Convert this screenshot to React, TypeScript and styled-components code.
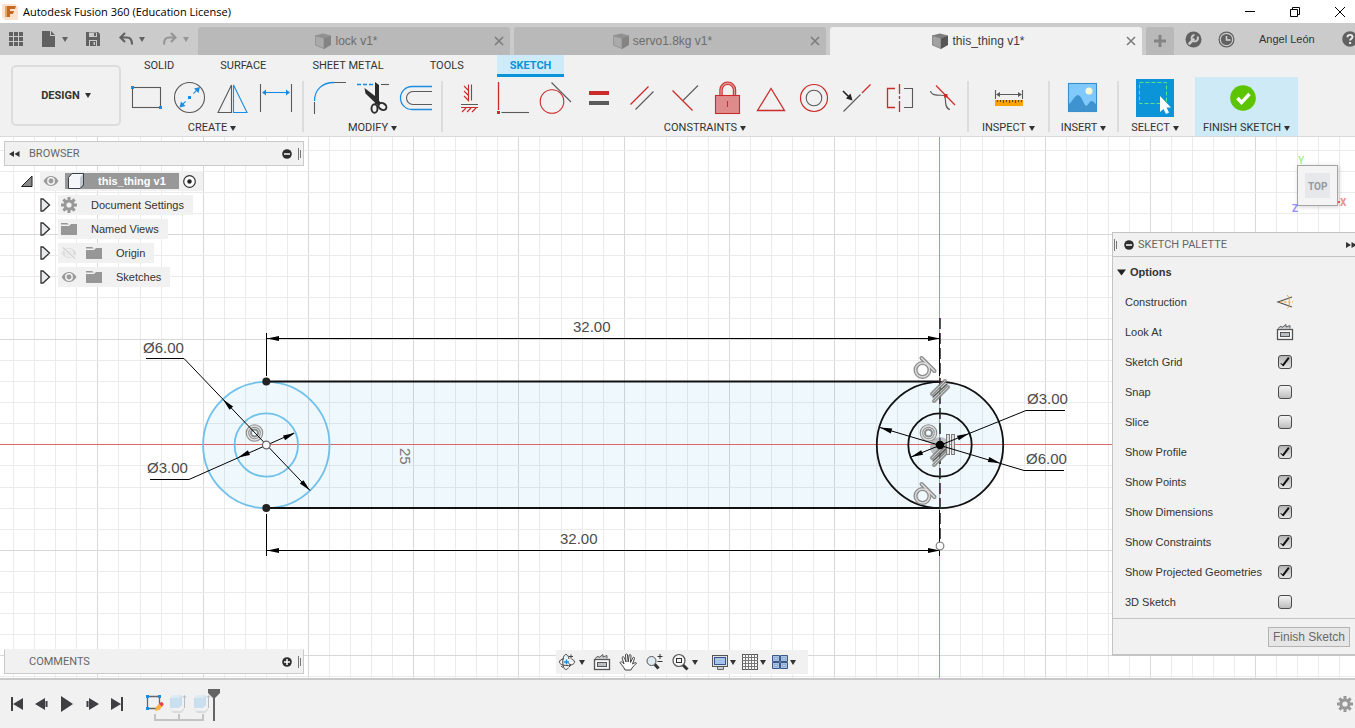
import React, { useState } from "react";
import styled, { createGlobalStyle, css } from "styled-components";

const UI = '"Liberation Sans", Arial, sans-serif';
const CAPS = 'Roboto, "Liberation Sans", sans-serif';
const INK = "#5a5a5a";
const BLUE = "#1b8ce3";
const RED = "#cc2b2b";

const GlobalStyle = createGlobalStyle`
  *, *::before, *::after { box-sizing: border-box; }
  html, body { margin: 0; padding: 0; background: #fff; }
  body { overflow: hidden; font-family: ${UI}; font-size: 11px; color: #333; }
  button { margin: 0; padding: 0; border: 0; background: none; font: inherit; color: inherit; cursor: pointer; }
  svg { display: block; flex: none; }
`;

const App = styled.div`
  display: flex;
  flex-direction: column;
  min-height: 100vh;
`;

/* ---------- title bar ---------- */
const TitleBar = styled.header`
  display: flex;
  align-items: center;
  height: 23px;
  padding-left: 2px;
  gap: 5px;
  background: #fff;
`;
const Title = styled.h1`
  flex: 1;
  margin: 0;
  font: 400 11px/20px "Open Sans", "Noto Sans", sans-serif;
  color: #000;
  white-space: nowrap;
`;
const WindowControls = styled.div`
  display: flex;
  margin-right: -7px;
`;
const WindowButton = styled.button`
  display: flex;
  align-items: center;
  justify-content: center;
  width: 45px;
  height: 20px;
`;

/* ---------- document tab bar ---------- */
const TabBar = styled.nav`
  display: flex;
  align-items: flex-end;
  height: 32px;
  background: #cbcbcb;
`;
const QuickTools = styled.div`
  display: flex;
  align-items: center;
  gap: 17px;
  width: 198px;
  height: 32px;
  padding-left: 8px;
`;
const QuickButton = styled.button<{ $dim?: boolean }>`
  display: flex;
  align-items: center;
  gap: 5px;
  color: ${(p) => (p.$dim ? "#969696" : "#616161")};
`;
const DocTabs = styled.div`
  display: flex;
  flex: 1;
  gap: 4px;
  min-width: 0;
`;
const DocTab = styled.div<{ $active?: boolean }>`
  display: flex;
  align-items: center;
  flex: 1;
  min-width: 0;
  height: 28px;
  padding: 0 4px;
  border-radius: 3px 3px 0 0;
  background: ${(p) => (p.$active ? "#f1f1f1" : "#b9b9b9")};
  color: ${(p) => (p.$active ? "#3c3c3c" : "#6c6c6c")};
`;
const DocName = styled.button`
  display: flex;
  flex: 1;
  align-items: center;
  justify-content: center;
  gap: 4px;
  font-size: 12px;
  white-space: nowrap;
`;
const CloseButton = styled.button`
  display: flex;
  align-items: center;
  justify-content: center;
  width: 15px;
  height: 20px;
  color: #7a7a7a;
`;
const NewTab = styled.button`
  display: flex;
  align-items: center;
  justify-content: center;
  width: 28px;
  height: 28px;
  margin-left: 4px;
  border-radius: 3px 3px 0 0;
  background: #b9b9b9;
`;
const Account = styled.div`
  display: flex;
  align-items: center;
  gap: 16px;
  width: 181px;
  height: 32px;
  padding-left: 11px;
  overflow: hidden;
`;
const UserButton = styled.button`
  padding: 0 11px 0 8px;
  white-space: nowrap;
`;

/* ---------- ribbon ---------- */
const Ribbon = styled.section`
  display: flex;
  gap: 5px;
  height: 82px;
  padding-left: 11px;
  border-bottom: 1px solid #dadada;
  background: #f1f1f1;
  overflow: hidden;
`;
const WorkspaceButton = styled.button`
  display: flex;
  align-items: center;
  justify-content: center;
  gap: 5px;
  flex: none;
  width: 110px;
  height: 61px;
  margin-top: 10px;
  border: 2px solid #dcdcdc;
  border-radius: 5px;
  font: 700 11px/16px ${CAPS};
`;
const RibbonBody = styled.div`
  flex: none;
`;
const RibbonTabs = styled.div`
  display: flex;
  gap: 20px;
  height: 22px;
  padding-left: 5px;
`;
const RibbonTab = styled.button<{ $active?: boolean }>`
  height: 22px;
  padding: 3px 13px 0;
  font: 400 11px/16px ${CAPS};
  border-bottom: 3px solid transparent;
  white-space: nowrap;
  ${(p) =>
    p.$active &&
    css`
      font-weight: 700;
      color: #0a94d8;
      background: #cdebf8;
      border-bottom-color: #0a94d8;
    `}
`;
const Groups = styled.div`
  display: flex;
  gap: 4px;
  height: 59px;
`;
const Group = styled.div<{ $width?: number; $accent?: boolean }>`
  display: flex;
  flex-direction: column;
  align-items: center;
  gap: 4px;
  width: ${(p) => (p.$width ? `${p.$width}px` : "auto")};
  padding-top: 3px;
  ${(p) =>
    p.$accent &&
    css`
      margin-left: 4px;
      background: #cdeaf6;
    `}
`;
const Divider = styled.div`
  width: 2px;
  height: 51px;
  margin-top: 4px;
  background: #dcdcdc;
`;
const ToolRow = styled.div`
  display: flex;
`;
const ToolButton = styled.button`
  display: flex;
  align-items: center;
  justify-content: center;
  width: 43px;
  height: 36px;
`;
const GroupLabel = styled.button`
  display: flex;
  align-items: center;
  gap: 3px;
  height: 16px;
  font: 400 11px/16px ${CAPS};
  white-space: nowrap;
`;

/* ---------- canvas ---------- */
const Canvas = styled.main`
  position: relative;
  flex: 1;
  min-height: 541px;
  background: #fff;
  overflow: hidden;
`;
const Drawing = styled.svg`
  width: 100%;
  height: 100%;
  position: absolute;
  inset: 0;
`;
const BrowserDock = styled.aside`
  position: absolute;
  left: 4px;
  top: 4px;
  width: 300px;
`;
const PanelHeader = styled.div<{ $open?: boolean }>`
  display: flex;
  align-items: center;
  height: 25px;
  padding: 0 1px 0 4px;
  border: 1px solid #cacaca;
  border-top-color: ${(p) => (p.$open ? "#cacaca" : "#f1f1f1")};
  background: #f1f1f1;
  font: 400 11px/16px ${CAPS};
  color: #666;
`;
const PanelTitle = styled.span<{ $inset?: boolean }>`
  flex: 1;
  margin-left: ${(p) => (p.$inset ? "20px" : "9px")};
`;
const PanelIcons = styled.div`
  display: flex;
  align-items: center;
  gap: 6px;
`;
const Tree = styled.ul`
  list-style: none;
  display: flex;
  flex-direction: column;
  gap: 4px;
  margin: 5px 0 0;
  padding: 0 0 0 16px;
`;
const TreeRow = styled.li<{ $depth: number }>`
  display: flex;
  align-items: center;
  gap: 7px;
  height: 20px;
  padding-left: ${(p) => p.$depth * 19}px;
`;
const TreeItem = styled.div`
  display: flex;
  align-items: center;
  height: 20px;
  padding: 0 9px 0 3px;
  background: #f1f1f1;
  white-space: nowrap;
`;
const RootItem = styled(TreeItem)`
  padding-right: 7px;
`;
const TreeName = styled.button`
  display: flex;
  align-items: center;
  gap: 14px;
`;
const VisibilityButton = styled.button`
  margin-right: 9px;
`;
const RootName = styled(TreeName)`
  height: 16px;
  margin-right: 4px;
  margin-left: -3px;
  padding: 0 13px 0 3px;
  background: #989898;
  color: #fff;
  font-weight: 700;
`;
const CommentsDock = styled.aside`
  position: absolute;
  left: 4px;
  bottom: 4px;
  width: 300px;
`;
const CubeDock = styled.div`
  position: absolute;
  right: 5px;
  top: 16px;
`;

/* ---------- sketch palette ---------- */
const Palette = styled.aside`
  position: absolute;
  right: 0;
  top: 95px;
  width: 243px;
  border: 1px solid #c4c4c4;
  border-right: 0;
  border-bottom-width: 2px;
  background: #f1f1f1;
  overflow: hidden;
`;
const PaletteHeader = styled.div`
  display: flex;
  align-items: center;
  gap: 4px;
  height: 24px;
  padding-left: 1px;
  border-bottom: 1px solid #c4c4c4;
  font: 400 11px/16px ${CAPS};
  color: #666;
`;
const PaletteTitle = styled.span`
  flex: 1;
`;
const PaletteGrip = styled.div`
  width: 6px;
`;
const CollapseButton = styled.button`
  margin-right: -2px;
`;
const PaletteSection = styled.button`
  display: flex;
  align-items: center;
  gap: 4px;
  height: 30px;
  padding-left: 4px;
  font-weight: 700;
`;
const OptionRow = styled.div`
  display: flex;
  align-items: center;
  height: 30px;
  padding-left: 12px;
`;
const OptionLabel = styled.label`
  width: 151px;
  white-space: nowrap;
`;
const OptionControl = styled.div`
  display: flex;
  justify-content: center;
  width: 18px;
`;
const Check = styled.input`
  appearance: none;
  display: flex;
  justify-content: center;
  width: 14px;
  height: 14px;
  margin: 0;
  border: 1px solid #4a4a4a;
  border-radius: 3px;
  background: linear-gradient(#f4f4f4, #bdbdbd);
  &:checked {
    background: linear-gradient(#b4b4b4, #e4e4e4);
  }
  &:checked::before {
    content: "";
    width: 4px;
    height: 10px;
    border: solid #111;
    border-width: 0 2px 1px 0;
    transform: rotate(38deg);
  }
`;
const PaletteFooter = styled.div`
  display: flex;
  justify-content: flex-end;
  height: 36px;
  margin-top: 1px;
  padding: 8px 5px 0 0;
  border-top: 1px solid #c4c4c4;
`;
const FinishButton = styled.button`
  width: 82px;
  height: 20px;
  border: 1px solid #b4b4b4;
  background: #e6e6e6;
  font-size: 12px;
  color: #6a6a6a;
`;

/* ---------- navigation bar ---------- */
const NavDock = styled.div`
  position: absolute;
  left: 8px;
  right: 0;
  bottom: 4px;
  display: flex;
  justify-content: center;
  pointer-events: none;
`;
const NavBar = styled.div`
  display: flex;
  align-items: center;
  gap: 13px;
  height: 24px;
  padding: 0 12px 0 2px;
  background: #f1f1f1;
  pointer-events: auto;
`;
const NavGroup = styled.div<{ $gap: number }>`
  display: flex;
  gap: ${(p) => p.$gap}px;
`;
const NavButton = styled.button<{ $gap?: number }>`
  display: flex;
  align-items: center;
  gap: ${(p) => p.$gap ?? 1}px;
`;

/* ---------- timeline ---------- */
const Timeline = styled.footer`
  display: flex;
  align-items: center;
  height: 50px;
  padding: 0 2px 0 9px;
  border-top: 2px solid #c9c9c9;
  background: #f1f1f1;
`;
const Playback = styled.div`
  display: flex;
  gap: 9px;
`;
const History = styled.div`
  display: flex;
  flex: 1;
  height: 34px;
  margin-left: 17px;
`;
const Features = styled.div`
  display: flex;
  flex-direction: column;
  gap: 1px;
  padding-top: 6px;
`;
const FeatureRow = styled.div`
  display: flex;
`;
const Marker = styled.div`
  margin-left: -6px;
`;

/* ---------- small glyphs ---------- */
const Caret = () => (
  <svg width="6" height="5" viewBox="0 0 6 5"><path d="M0 0h6L3 5z" fill="currentColor" /></svg>
);
const Doc = ({ active }: { active?: boolean }) => (
  <svg width="16" height="16" viewBox="0 0 16 16">
    <path d="M0 2.500 8 .5l8 2-7 3z" fill={active ? "#7d7d7d" : "#919191"} />
    <path d="M.4 2.700 9 5v10.600L.4 12z" fill={active ? "#a2a2a2" : "#aaa"} stroke={active ? "#777" : "#8d8d8d"} strokeWidth=".8" />
    <path d="M9 5.200 16 2.500V12l-7 4z" fill={active ? "#555" : "#848484"} />
  </svg>
);
const Cross = () => (
  <svg width="10" height="10" viewBox="0 0 10 10"><path d="M1 1l8 8M9 1 1 9" stroke="currentColor" strokeWidth="1.500" /></svg>
);
const Eye = ({ off }: { off?: boolean }) => (
  <svg width="16" height="12" viewBox="0 0 16 12">
    <path d="M.5 6C3 2 5.500 1 8 1s5 1 7.500 5C13 10 10.500 11 8 11S3 10 .5 6z" fill={off ? "#dedede" : "#9a9a9a"} />
    <circle cx="8" cy="6" r="3.200" fill="none" stroke="#f1f1f1" strokeWidth="1.500" />
    {off && <path d="M2 .5 14 11.500" stroke="#f1f1f1" strokeWidth="3" />}
    {off && <path d="M2 .5 14 11.500" stroke="#d2d2d2" strokeWidth="1.200" />}
  </svg>
);
const Folder = () => (
  <svg width="16" height="14" viewBox="0 0 16 14">
    <path d="M0 1h6l2 1.500H0zM0 4h8l2-2h6v11H0z" fill="#979797" />
  </svg>
);
const Gear = () => (
  <svg width="16" height="16" viewBox="0 0 16 16">
    {[0, 45, 90, 135].map((a) => (
      <rect key={a} x="6.500" y="0" width="3" height="16" fill="#989898" transform={`rotate(${a} 8 8)`} />
    ))}
    <circle cx="8" cy="8" r="5.600" fill="#989898" />
    <circle cx="8" cy="8" r="2.600" fill="#f1f1f1" />
  </svg>
);
const Disc = ({ plus }: { plus?: boolean }) => (
  <svg width="10" height="10" viewBox="0 0 10 10">
    <circle cx="5" cy="5" r="4.800" fill="#2e2e2e" />
    <path d={plus ? "M2 5h6M5 2v6" : "M2 5h6"} stroke="#fff" strokeWidth="1.500" />
  </svg>
);
const Grip = () => (
  <svg width="4" height="12" viewBox="0 0 4 12"><path d="M.5 0v12M2.500 2v8" stroke="#777" /></svg>
);
const DoubleArrow = ({ right }: { right?: boolean }) => (
  <svg width="11" height="6" viewBox="0 0 11 6">
    <path d={right ? "M0 0v6l5-3zM5.500 0v6l5-3z" : "M5 0v6L0 3zM10.500 0v6l-5-3z"} fill="#333" />
  </svg>
);
const Expander = () => (
  <svg width="12" height="16" viewBox="0 0 12 16">
    <path d="M2 2v12h2l6.500-6L4 2z" fill="#e9ecec" stroke="#333" strokeWidth="1.300" />
  </svg>
);
const LookAt = () => (
  <svg width="18" height="18" viewBox="0 0 18 18" fill="none" stroke="#555">
    <path d="M2 5.500 5 3l1 1.500 4-3V4l4-1.500v3" fill="#c5c9cc" strokeWidth=".9" />
    <rect x="1.500" y="6.500" width="15" height="10" fill="#fafafa" strokeWidth="1.300" />
    <rect x="4.500" y="9.500" width="9" height="4" fill="#b9bec2" />
  </svg>
);

/* ---------- ribbon tools, each on a 43 x 36 cell ---------- */
const Tool = ({ name, children }: { name: string; children: React.ReactNode }) => (
  <ToolButton aria-label={name}>
    <svg width="43" height="36" viewBox="0 0 43 36" fill="none" stroke={INK} strokeWidth="1.100">{children}</svg>
  </ToolButton>
);

const createTools = (
  <ToolRow>
    <Tool name="Rectangle">
      <rect x="6.500" y="7.500" width="28" height="20" />
      <path d="M5 6h3v3H5zM33 26h3v3h-3z" fill={BLUE} stroke="none" />
    </Tool>
    <Tool name="Circle">
      <circle cx="20.500" cy="17.500" r="15" />
      <path d="M12 26 29 9" stroke={BLUE} strokeDasharray="6.500 3.500 4 3.500 8" />
      <path d="M19 16h3v3h-3zM31 7l-1.500 6-4.500-4.500zM10.500 27.500l1.500-6 4.500 4.500z" fill={BLUE} stroke="none" />
    </Tool>
    <Tool name="Mirror">
      <path d="M19.500 5v27.500H6z" />
      <path d="M21.500 5v27.500H35z" stroke={BLUE} />
    </Tool>
    <Tool name="Sketch dimension">
      <path d="M5.500 4v28M36.500 4v28" />
      <path d="M9 12.500h24" stroke={BLUE} />
      <path d="M7 12.500l4-3v6zM35 12.500l-4-3v6z" fill={BLUE} stroke="none" />
    </Tool>
  </ToolRow>
);
const modifyTools = (
  <ToolRow>
    <Tool name="Fillet">
      <path d="M6.500 34V22M26 2.500h12" />
      <path d="M6.500 21C6.500 10 14 2.500 26 2.500" stroke={BLUE} strokeWidth="1.300" />
    </Tool>
    <Tool name="Trim">
      <path d="M6 4.500h4M12 4.500h4M18 4.500h4" stroke={BLUE} strokeWidth="1.300" />
      <path d="M30 4.500h8" />
      <path d="M24 2l4 3v17l-4 3zM13.500 8 24 16l6 7-3 2.500L14.500 13.500z" fill="#2b2b2b" stroke="none" />
      <ellipse cx="23.500" cy="28.500" rx="3" ry="4.300" stroke="#2b2b2b" strokeWidth="1.900" />
      <ellipse cx="31.500" cy="26.500" rx="4.200" ry="3.200" stroke="#2b2b2b" strokeWidth="1.900" transform="rotate(35 31.500 26.500)" />
    </Tool>
    <Tool name="Offset">
      <path d="M38 6.500H18a11.500 11.500 0 0 0 0 23h20" stroke={BLUE} strokeWidth="1.300" />
      <path d="M38 11.500H19a6.500 6.500 0 0 0 0 13h19" />
    </Tool>
  </ToolRow>
);
const constraintTools = (
  <ToolRow>
    <Tool name="Horizontal or vertical">
      <path d="M24.500 4.500v16M14 24.500h17" />
      <path d="M21.500 4.500v17M17 6l4.500 4.500M17 11l4.500 4.500M17 16l4.500 4.500M14 27.500h17M15 32l4-4M20 32l4-4M25 32l4-4" stroke={RED} />
    </Tool>
    <Tool name="Coincident">
      <path d="M8.500 2v28" stroke={RED} strokeWidth="1.300" />
      <path d="M7 31h3v3H7z" fill={RED} stroke="none" />
      <path d="M11.500 32.500H39" />
    </Tool>
    <Tool name="Tangent">
      <circle cx="19" cy="21.500" r="11.800" stroke={RED} />
      <path d="M18.500 2.500 38 22" />
    </Tool>
    <Tool name="Equal">
      <path d="M13 11h20v4H13z" fill={RED} stroke="none" />
      <path d="M13 21h20v4H13z" fill={INK} stroke="none" />
    </Tool>
    <Tool name="Parallel">
      <path d="M11.500 24.500l18-18" stroke={RED} strokeWidth="1.300" />
      <path d="M16.500 29.500l18-18" />
    </Tool>
    <Tool name="Perpendicular">
      <path d="M10.500 10.500l20 20" stroke={RED} strokeWidth="1.300" />
      <path d="M21 20.500l15-15" />
    </Tool>
    <Tool name="Fix">
      <path d="M16 16v-6a6.500 6.500 0 0 1 13.500 0v6" stroke={RED} strokeWidth="3.400" />
      <path d="M16 16v-6a6.500 6.500 0 0 1 13.500 0v6" stroke="#e49a9a" strokeWidth="1.300" />
      <rect x="10.500" y="15.500" width="24" height="18" fill="#e08b8b" stroke={RED} />
      <path d="M22.500 21v6" stroke={RED} />
    </Tool>
    <Tool name="Midpoint">
      <path d="M23 8.500 9.500 30.500h27z" stroke={RED} strokeWidth="1.300" />
    </Tool>
    <Tool name="Concentric">
      <circle cx="23" cy="18" r="13.500" stroke={RED} strokeWidth="1.200" />
      <circle cx="23" cy="18" r="7.800" />
    </Tool>
    <Tool name="Collinear">
      <path d="M9.500 31.500l17-17" />
      <path d="M28 13l8.500-8.500" stroke={RED} strokeWidth="1.300" />
      <path d="M9 11l6 6" stroke="#222" strokeWidth="1.600" />
      <path d="M18.500 20.500l-6.500-2 4.500-5z" fill="#222" stroke="none" />
    </Tool>
    <Tool name="Symmetry">
      <path d="M18 8.500h-7.500v19H18M22.500 4v10M22.500 16v3M22.500 21v11" stroke={RED} strokeWidth="1.300" />
      <path d="M27 8.500h8.500v19H27" />
    </Tool>
    <Tool name="Curvature">
      <path d="M10.500 11c1 5 8 4 14 4.500 2 2-1 13 5.500 14" />
      <path d="M16 5.500 35 25" stroke={RED} strokeWidth="1.200" />
      <path d="M24 14h3.500v3.500H24z" fill={RED} stroke="none" />
    </Tool>
  </ToolRow>
);
const inspectTool = (
  <Tool name="Measure">
    <path d="M8.500 10v9M35.500 10v9M11 14.500h22" />
    <path d="M9 14.500l4-2.500v5zM35 14.500l-4-2.500v5z" fill={INK} stroke="none" />
    <path d="M8 20h28v6H8z" fill="#f9a200" stroke="none" />
    <path d="M10.500 20v2M13.500 20v2M16.500 20v3M19.500 20v2M22.500 20v3M25.500 20v2M28.500 20v3M31.500 20v2M34.500 20v2" stroke="#6b4a10" />
  </Tool>
);
const insertTool = (
  <Tool name="Insert image">
    <rect x="6.500" y="3.500" width="28" height="28" fill="#80c9fc" stroke="#3b8fc9" />
    <circle cx="27" cy="11" r="3.500" fill="#fdf8cf" stroke="none" />
    <path d="M7 24c4-3 5-8 9-9 4 1 5 8 8 11 3-1 3-5 5.500-5 2 0 3 2 5 4v6.500H7z" fill="#3f93cf" stroke="none" />
  </Tool>
);
const selectTool = (
  <ToolButton aria-label="Select">
    <svg width="38" height="38" viewBox="0 0 38 38">
      <path d="M0 0h38v38H0z" fill="#0c94d8" />
      <rect x="3.500" y="3.500" width="27" height="21" fill="none" stroke="#5fe08c" strokeDasharray="4 2" />
      <path d="M24 17v16l3.500-3 2.500 5 3-1.500-2.500-5h4.500z" fill="#fff" />
    </svg>
  </ToolButton>
);
const finishTool = (
  <Tool name="Finish sketch">
    <circle cx="18" cy="18" r="12.800" fill="#5cc400" stroke="none" />
    <path d="M12.500 18l4 4.500 8-8.500" stroke="#fff" strokeWidth="3.400" />
  </Tool>
);

/* ---------- sketch geometry ---------- */
const UNIT = 21.05;
const OX = 939.4;
const OY = 444.4;

const Grid = () => {
  const lines = [];
  for (let k = -46; k <= 90; k++) {
    const major = k % 5 === 0;
    lines.push(<rect key={`v${k}`} x={Math.round(OX + k * UNIT)} y="0" width="1" height="3000" fill={major ? "#d8d8d8" : "#ebebeb"} />);
  }
  for (let k = -20; k <= 90; k++) {
    const major = k % 5 === 0;
    lines.push(<rect key={`h${k}`} x="0" y={Math.round(OY + k * UNIT)} width="4000" height="1" fill={major ? "#d8d8d8" : "#ebebeb"} />);
  }
  return <g shapeRendering="crispEdges">{lines}</g>;
};

const Arrow = ({ x, y, a }: { x: number; y: number; a: number }) => (
  <path d="M0 0-12-2.500v5z" fill="#000" transform={`translate(${x} ${y}) rotate(${a})`} />
);

const TangentMark = ({ x, y }: { x: number; y: number }) => (
  <g transform={`translate(${x} ${y})`} fill="none" strokeLinecap="round">
    <g stroke="#8b8b8b" strokeWidth="4"><circle r="7" /><path d="M-1-12 12 1" /></g>
    <g stroke="#dcdcdc" strokeWidth="1.500"><circle r="7" /><path d="M-1-12 12 1" /></g>
  </g>
);
const ConcentricMark = ({ x, y }: { x: number; y: number }) => (
  <g transform={`translate(${x} ${y})`} fill="none">
    <circle r="7" stroke="#8b8b8b" strokeWidth="3.600" />
    <circle r="7" stroke="#e2e2e2" strokeWidth="1.500" />
    <circle r="3.500" stroke="#8b8b8b" strokeWidth="2" />
  </g>
);
const ParallelMark = ({ x, y }: { x: number; y: number }) => (
  <g transform={`translate(${x} ${y})`} strokeLinecap="round">
    <path d="M-8 3 5-10M-6 10 8-4" stroke="#858585" strokeWidth="4" opacity=".85" />
    <path d="M-7 6 7-7" stroke="#555" strokeWidth="1.500" />
    <path d="M-8 3 5-10M-6 10 8-4" stroke="#cfcfcf" />
  </g>
);

const Sketch = () => (
  <Drawing role="img" aria-label="Sketch of a link with two concentric circle ends">
    <g transform="translate(0 -137)">
      <Grid />
      <path d="M266 381.500h674a63.300 63.300 0 0 1 0 126.700H266a63.300 63.300 0 0 1 0-126.700z" fill="rgba(20,150,225,.065)" />
      <path d="M0 444.500h4000" stroke="#d9686d" />
      <path d="M939.500 0v3000" stroke="#69c46c" />

      <g fill="none" stroke="#6fc0ea" strokeWidth="1.800">
        <circle cx="266.300" cy="445" r="63.200" />
        <circle cx="266.300" cy="445" r="31.700" />
      </g>
      <g fill="none" stroke="#111" strokeWidth="1.800">
        <circle cx="940" cy="445" r="63.200" />
        <circle cx="940" cy="445" r="31.700" />
        <path d="M266 381.500h674M266 508h674" strokeWidth="2" />
        <path d="M940 318v228" stroke="#222" strokeWidth="1.500" strokeDasharray="11 4" />
      </g>

      <ConcentricMark x={254.5} y={433} />
      <TangentMark x={922.5} y={370} />
      <TangentMark x={922.5} y={496} />
      <ParallelMark x={940} y={391} />
      <ConcentricMark x={928.5} y={433} />
      <circle cx="940" cy="447" r="10" fill="#888" opacity=".5" />
      <ParallelMark x={940} y={455} />
      <g fill="#dedede" stroke="#7d7d7d"><rect x="946.500" y="434.500" width="3" height="20" /><rect x="951.500" y="434.500" width="3" height="20" /></g>

      <g stroke="#000" fill="none">
        <path d="M266.500 333v43M939.500 333v43M266.500 514v42M939.500 510v46" />
        <path d="M267 338.500h673M267 550.500h673" />
        <path d="M146 358.500h38L310 490.500M150 479.500h39L294 433M1065 410.500h-39L911 457M1064 470.500h-40L880 427.500" />
      </g>
      <Arrow x={267} y={338.5} a={180} />
      <Arrow x={940} y={338.5} a={0} />
      <Arrow x={267} y={550.5} a={180} />
      <Arrow x={940} y={550.5} a={0} />
      <Arrow x={223} y={399.5} a={226} />
      <Arrow x={310} y={490.5} a={46} />
      <Arrow x={238} y={457.5} a={156} />
      <Arrow x={295} y={433} a={-24} />
      <Arrow x={969} y={433.5} a={-22} />
      <Arrow x={911} y={457} a={158} />
      <Arrow x={880} y={427.5} a={197} />
      <Arrow x={1000} y={463} a={17} />

      <circle cx="266.300" cy="381.500" r="4" fill="#222" />
      <circle cx="266.300" cy="508" r="4" fill="#222" />
      <circle cx="940" cy="445" r="4.300" fill="#000" />
      <circle cx="266.300" cy="445" r="3.800" fill="#fff" stroke="#666" strokeWidth="1.300" />
      <circle cx="940" cy="546" r="3.800" fill="#fff" stroke="#888" strokeWidth="1.300" />

      <g fontFamily={UI} fontSize="15" fill="#4c4c4c">
        <text x="573" y="332">32.00</text>
        <text x="560" y="544">32.00</text>
        <text x="143" y="353">Ø6.00</text>
        <text x="147" y="473">Ø3.00</text>
        <text x="1027" y="404">Ø3.00</text>
        <text x="1026" y="464">Ø6.00</text>
        <text transform="translate(400 448) rotate(90)" fill="#777">25</text>
      </g>
    </g>
  </Drawing>
);

const ViewCube = () => (
  <svg width="58" height="60" viewBox="0 0 58 60" fontFamily={CAPS} fontWeight="700">
    <defs>
      <filter id="cube-shadow" x="-20%" y="-20%" width="150%" height="150%">
        <feDropShadow dx="1" dy="1" stdDeviation="2" floodOpacity=".18" />
      </filter>
    </defs>
    <rect x="5.500" y="12.500" width="40" height="40" fill="#f4f4f5" stroke="#a5a5a5" filter="url(#cube-shadow)" />
    <rect x="13" y="20" width="25" height="25" fill="#e6e8ec" />
    <text x="16" y="37" fontSize="10" fill="#95999e">TOP</text>
    <text x="6" y="11" fontSize="10" fill="#a4ef98">Y</text>
    <text x="0" y="59" fontSize="10" fill="#8f8ff5">Z</text>
    <text x="48" y="53" fontSize="10" fill="#ea9292">X</text>
    <path d="M46 48h2v2h-2z" fill="#d55" />
  </svg>
);

/* ---------- data ---------- */
const docs = [
  { name: "lock v1*" },
  { name: "servo1.8kg v1*" },
  { name: "this_thing v1*", active: true },
];
const ribbonTabs = ["SOLID", "SURFACE", "SHEET METAL", "TOOLS", "SKETCH"];
const initialOptions = [
  { name: "Sketch Grid", on: true },
  { name: "Snap", on: false },
  { name: "Slice", on: false },
  { name: "Show Profile", on: true },
  { name: "Show Points", on: true },
  { name: "Show Dimensions", on: true },
  { name: "Show Constraints", on: true },
  { name: "Show Projected Geometries", on: true },
  { name: "3D Sketch", on: false },
];

const Label = ({ children }: { children: string }) => (
  <GroupLabel>{children}<Caret /></GroupLabel>
);

const Extrude = () => (
  <svg width="24" height="20" viewBox="0 0 24 20">
    <path d="M4 16l3 2h8l3-3v2l-3 3H7z" fill="#d9dcde" />
    <path d="M4 5l3-3h9v10l-3 3H4z" fill="#cbe0ee" />
    <path d="M4 5l3-3h9l-3 3z" fill="#dcebf4" />
    <path d="M18.500 15V3M17 4.500 18.500 2.500 20 4.500" stroke="#b8bcc0" fill="none" />
  </svg>
);

export default function FusionApp() {
  const [options, setOptions] = useState(initialOptions);
  const toggle = (i: number) =>
    setOptions((list) => list.map((o, n) => (n === i ? { ...o, on: !o.on } : o)));

  return (
    <App>
      <GlobalStyle />
      <TitleBar>
        <svg width="16" height="16" viewBox="0 0 16 16">
          <path d="M0 0h13l3 3v13H3l-3-3z" fill="#fbe3cf" />
          <path d="M5 2h9l-1 3H8v2h4l-1 3H8v3H5z" fill="#c46a22" />
          <path d="M3 2h2v11H3z" fill="#eaa365" />
        </svg>
        <Title>Autodesk Fusion 360 (Education License)</Title>
        <WindowControls>
          <WindowButton aria-label="Minimize">
            <svg width="10" height="10"><path d="M0 4.500h10" stroke="#000" /></svg>
          </WindowButton>
          <WindowButton aria-label="Restore">
            <svg width="10" height="10" fill="none" stroke="#000"><path d="M.5 2.500h7v7h-7zM2.500 2.500v-2h7v7h-2" /></svg>
          </WindowButton>
          <WindowButton aria-label="Close">
            <svg width="10" height="10"><path d="M0 0l10 10M10 0 0 10" stroke="#000" /></svg>
          </WindowButton>
        </WindowControls>
      </TitleBar>

      <TabBar>
        <QuickTools>
          <QuickButton aria-label="Data panel">
            <svg width="16" height="16" viewBox="0 0 16 16" fill="currentColor">
              {[1, 6, 11].map((x) => [1, 6, 11].map((y) => <rect key={`${x}-${y}`} x={x} y={y} width="4" height="4" />))}
            </svg>
          </QuickButton>
          <QuickButton aria-label="File">
            <svg width="16" height="16" viewBox="0 0 16 16"><path d="M1 0h8v5h5v11H1zM10 0l4 4h-4z" fill="currentColor" /></svg>
            <Caret />
          </QuickButton>
          <QuickButton aria-label="Save">
            <svg width="16" height="16" viewBox="0 0 16 16">
              <path d="M1 1h12l2 2v12H1z" fill="currentColor" />
              <path d="M4 1.500h8V6H4zM4 9h8v6H4z" fill="#cbcbcb" />
              <path d="M9 2h2v3H9zM5 10h6v5H5z" fill="currentColor" />
              <path d="M8.500 11h1.500v3H8.500z" fill="#cbcbcb" />
            </svg>
          </QuickButton>
          <QuickButton aria-label="Undo">
            <svg width="16" height="14" viewBox="0 0 16 14" fill="none" stroke="currentColor" strokeWidth="2.200">
              <path d="M7 1 2.500 5.500 7 10M3 5.500h6c3 0 5 2 5 7" />
            </svg>
            <Caret />
          </QuickButton>
          <QuickButton aria-label="Redo" $dim>
            <svg width="16" height="14" viewBox="0 0 16 14" fill="none" stroke="currentColor" strokeWidth="2.200">
              <path d="M9 1l4.500 4.500L9 10M13 5.500H7c-3 0-5 2-5 7" />
            </svg>
            <Caret />
          </QuickButton>
        </QuickTools>
        <DocTabs>
          {docs.map((d) => (
            <DocTab key={d.name} $active={d.active}>
              <DocName><Doc active={d.active} />{d.name}</DocName>
              <CloseButton aria-label={`Close ${d.name}`}><Cross /></CloseButton>
            </DocTab>
          ))}
        </DocTabs>
        <NewTab aria-label="New design">
          <svg width="14" height="14"><path d="M7 1v12M1 7h12" stroke="#858585" strokeWidth="3" /></svg>
        </NewTab>
        <Account>
          <button aria-label="Extensions">
            <svg width="17" height="17" viewBox="0 0 17 17">
              <circle cx="8.500" cy="8.500" r="8" fill="#616161" />
              <path d="M4.500 12.500l4-4" stroke="#cbcbcb" strokeWidth="2.600" strokeLinecap="round" />
              <path d="M12.500 5.500A3.200 3.200 0 1 1 9.500 4" fill="none" stroke="#cbcbcb" strokeWidth="2" />
            </svg>
          </button>
          <button aria-label="Job status">
            <svg width="17" height="17" viewBox="0 0 17 17">
              <circle cx="8.500" cy="8.500" r="7.400" fill="#cbcbcb" stroke="#616161" strokeWidth="1.200" />
              <circle cx="8.500" cy="8.500" r="5.600" fill="#616161" />
              <path d="M8.500 5v4h4" fill="none" stroke="#d8d8d8" strokeWidth="1.500" />
            </svg>
          </button>
          <UserButton>Angel León</UserButton>
          <button aria-label="Help">
            <svg width="16" height="16" viewBox="0 0 16 16">
              <circle cx="8" cy="8" r="7.800" fill="#616161" />
              <path d="M5.500 6.200C5.500 3 10.500 3.200 10.500 6c0 1.700-2.400 1.700-2.400 3.600" fill="none" stroke="#eee" strokeWidth="1.900" />
              <rect x="7.100" y="11" width="2" height="2" fill="#eee" />
            </svg>
          </button>
        </Account>
      </TabBar>

      <Ribbon>
        <WorkspaceButton>DESIGN<Caret /></WorkspaceButton>
        <RibbonBody>
          <RibbonTabs>
            {ribbonTabs.map((t) => <RibbonTab key={t} $active={t === "SKETCH"}>{t}</RibbonTab>)}
          </RibbonTabs>
          <Groups>
            <Group>{createTools}<Label>CREATE</Label></Group>
            <Divider />
            <Group>{modifyTools}<Label>MODIFY</Label></Group>
            <Divider />
            <Group>{constraintTools}<Label>CONSTRAINTS</Label></Group>
            <Divider />
            <Group $width={71}>{inspectTool}<Label>INSPECT</Label></Group>
            <Divider />
            <Group $width={59}>{insertTool}<Label>INSERT</Label></Group>
            <Divider />
            <Group $width={64}>{selectTool}<Label>SELECT</Label></Group>
            <Group $width={103} $accent>{finishTool}<Label>FINISH SKETCH</Label></Group>
          </Groups>
        </RibbonBody>
      </Ribbon>

      <Canvas>
        <Sketch />

        <BrowserDock>
          <PanelHeader $open>
            <DoubleArrow />
            <PanelTitle>BROWSER</PanelTitle>
            <PanelIcons><Disc /><Grip /></PanelIcons>
          </PanelHeader>
          <Tree>
            <TreeRow $depth={0}>
              <svg width="13" height="14" viewBox="0 0 13 14"><path d="M12 2v10.500H1.500z" fill="#888" stroke="#222" /></svg>
              <RootItem>
                <VisibilityButton aria-label="Hide this_thing v1"><Eye /></VisibilityButton>
                <RootName>
                  <svg width="16" height="16" viewBox="0 0 16 16" stroke="#3b3f46">
                    <path d="M.5 4.500 4 .5h11.500V12L12 15.500H.5z" fill="#f3f5f8" />
                    <path d="M12 15.500V4.500L15.500.5V12z" fill="#c3c8d0" stroke="none" />
                    <path d="M15.500.5V12L12 15.500" fill="none" />
                  </svg>
                  this_thing v1
                </RootName>
                <button aria-label="Activate this_thing v1">
                  <svg width="13" height="13" viewBox="0 0 13 13">
                    <circle cx="6.500" cy="6.500" r="5.800" fill="#fff" stroke="#333" strokeWidth="1.200" />
                    <circle cx="6.500" cy="6.500" r="2.200" fill="#222" />
                  </svg>
                </button>
              </RootItem>
            </TreeRow>
            <TreeRow $depth={1}><Expander /><TreeItem><TreeName><Gear />Document Settings</TreeName></TreeItem></TreeRow>
            <TreeRow $depth={1}><Expander /><TreeItem><TreeName><Folder />Named Views</TreeName></TreeItem></TreeRow>
            <TreeRow $depth={1}>
              <Expander />
              <TreeItem>
                <VisibilityButton aria-label="Show Origin"><Eye off /></VisibilityButton>
                <TreeName><Folder />Origin</TreeName>
              </TreeItem>
            </TreeRow>
            <TreeRow $depth={1}>
              <Expander />
              <TreeItem>
                <VisibilityButton aria-label="Hide Sketches"><Eye /></VisibilityButton>
                <TreeName><Folder />Sketches</TreeName>
              </TreeItem>
            </TreeRow>
          </Tree>
        </BrowserDock>

        <CommentsDock>
          <PanelHeader>
            <PanelTitle $inset>COMMENTS</PanelTitle>
            <PanelIcons><Disc plus /><Grip /></PanelIcons>
          </PanelHeader>
        </CommentsDock>

        <CubeDock><ViewCube /></CubeDock>

        <Palette>
          <PaletteHeader>
            <PaletteGrip><Grip /></PaletteGrip>
            <Disc />
            <PaletteTitle>SKETCH PALETTE</PaletteTitle>
            <CollapseButton aria-label="Collapse palette"><DoubleArrow right /></CollapseButton>
          </PaletteHeader>
          <PaletteSection>
            <svg width="9" height="7" viewBox="0 0 9 7"><path d="M0 .5h9L4.500 6.500z" fill="#222" /></svg>
            Options
          </PaletteSection>
          <OptionRow>
            <OptionLabel htmlFor="construction">Construction</OptionLabel>
            <OptionControl>
              <button id="construction">
                <svg width="18" height="18" viewBox="0 0 18 18" fill="none">
                  <path d="M16 4 2 9l14 5" stroke="#555" strokeWidth="1.200" />
                  <path d="M4 9h13M11 2c2 2 2.500 4 2.500 7s-.5 5-2.500 7" stroke="#f0a030" strokeDasharray="2.500 1.500" />
                </svg>
              </button>
            </OptionControl>
          </OptionRow>
          <OptionRow>
            <OptionLabel htmlFor="look-at">Look At</OptionLabel>
            <OptionControl><button id="look-at"><LookAt /></button></OptionControl>
          </OptionRow>
          {options.map((o, i) => (
            <OptionRow key={o.name}>
              <OptionLabel htmlFor={`option-${i}`}>{o.name}</OptionLabel>
              <OptionControl>
                <Check id={`option-${i}`} type="checkbox" checked={o.on} onChange={() => toggle(i)} />
              </OptionControl>
            </OptionRow>
          ))}
          <PaletteFooter><FinishButton>Finish Sketch</FinishButton></PaletteFooter>
        </Palette>

        <NavDock>
          <NavBar>
            <NavGroup $gap={8}>
              <NavButton aria-label="Orbit" $gap={3}>
                <svg width="18" height="18" viewBox="0 0 18 18" fill="none" stroke="#444">
                  <path d="M6 5.700C3 6.300 1.500 7.500 1.500 9c0 2 3 3.500 7.500 3.500s7.500-1.500 7.500-3.500c0-1.300-1-2.300-3-3" />
                  <path d="M11 6C10.600 3.300 9.500 1.500 8 1.500 6 1.500 4.800 5 4.800 9S6 16.500 8 16.500c1 0 1.800-.6 2.400-2" />
                  <path d="M11 3.500h4M13 1.500v4M3 13l2 1.500M13 12l-2.500-1.500M13 12l-2 2" />
                  <path d="M8.500 6.500v5M6 9h5" stroke={BLUE} strokeWidth="1.400" />
                </svg>
                <Caret />
              </NavButton>
              <NavButton aria-label="Look at"><LookAt /></NavButton>
              <NavButton aria-label="Pan">
                <svg width="18" height="18" viewBox="0 0 18 18" fill="#fdfdfd" stroke="#444" strokeLinejoin="round">
                  <path d="M6 17c-1-3-3.500-5-5-7.500 1-1.500 2.500-.5 4 1.500L3 4.500c1-1.500 2-.5 2.500.5l1.500 4-.5-7.500c1-1 2-.5 2 .5l.7 7 1-7c1-1 2 0 1.800 1L11.500 9.500l2.500-5c1-.5 1.800 0 1.500 1l-2 5.500c2-1 3-2 4-1-1.500 2-3 3-4.500 5l-1 2z" />
                </svg>
              </NavButton>
              <NavButton aria-label="Zoom">
                <svg width="18" height="18" viewBox="0 0 18 18" fill="none" stroke="#555">
                  <path d="M9.500 11l4 4.500" stroke="#333" strokeWidth="3" />
                  <circle cx="6.500" cy="8" r="4.500" fill="#dfeaf1" />
                  <path d="M15 1v5M12.500 3.500h5M12.500 8.500h5" stroke="#333" />
                </svg>
              </NavButton>
              <NavButton aria-label="Fit" $gap={3}>
                <svg width="18" height="18" viewBox="0 0 18 18" fill="none" stroke="#555">
                  <path d="M11.500 11.500l5 5" stroke="#333" strokeWidth="3" />
                  <circle cx="8" cy="7.500" r="6" fill="#f4f4f4" strokeWidth="1.200" />
                  <rect x="5.500" y="5.500" width="5" height="4" stroke="#333" />
                </svg>
                <Caret />
              </NavButton>
            </NavGroup>
            <NavGroup $gap={5}>
              <NavButton aria-label="Display settings">
                <svg width="18" height="18" viewBox="0 0 18 18">
                  <rect x="1.500" y="2.500" width="15" height="11" fill="#dfe3e6" stroke="#555" />
                  <rect x="3.500" y="4.500" width="11" height="7" fill="#a7c5ea" stroke="#37588c" />
                  <path d="M6.500 14v2.500h6V14" fill="#ccc" stroke="#666" />
                </svg>
                <Caret />
              </NavButton>
              <NavButton aria-label="Grid and snaps">
                <svg width="18" height="18" viewBox="0 0 18 18">
                  <rect x="1.500" y="1.500" width="15" height="15" fill="#fafafa" stroke="#555" />
                  <path d="M4.500 1v16M7.500 1v16M10.500 1v16M13.500 1v16M1 4.500h16M1 7.500h16M1 10.500h16M1 13.500h16" stroke="#777" />
                </svg>
                <Caret />
              </NavButton>
              <NavButton aria-label="Viewports">
                <svg width="18" height="18" viewBox="0 0 18 18" fill="#a9c3e4" stroke="#3c5a86">
                  <path d="M1.500 2.500h7v6h-7zM9.500 2.500h7v6h-7zM1.500 9.500h7v6h-7zM9.500 9.500h7v6h-7z" />
                  <path d="M3.500 4.500h3v2h-3zM11.500 4.500h3v2h-3zM3.500 11.500h3v2h-3zM11.500 11.500h3v2h-3z" fill="#c4d7ee" stroke="#7f9fc8" strokeWidth=".7" />
                </svg>
                <Caret />
              </NavButton>
            </NavGroup>
          </NavBar>
        </NavDock>
      </Canvas>

      <Timeline>
        <Playback>
          {[
            ["Go to start", "M2 1h2v14H2zM14 2v12L4 8z"],
            ["Step back", "M11 2v12L1 8zM11.500 5h2v6h-2z"],
            ["Play", "M2 0v16l12-8z"],
            ["Step forward", "M5 2v12l10-6zM2.500 5h2v6h-2z"],
            ["Go to end", "M2 2v12l10-6zM12 1h2v14h-2z"],
          ].map(([name, d]) => (
            <button key={name} aria-label={name}>
              <svg width="16" height="16" viewBox="0 0 16 16"><path d={d} fill="#3f3f42" /></svg>
            </button>
          ))}
        </Playback>
        <History>
          <Features>
            <FeatureRow>
              <button aria-label="Sketch1">
                <svg width="24" height="20" viewBox="0 0 24 20">
                  <path d="M5.500 3.500h12v12h-12z" fill="none" stroke="#666" strokeWidth="1.300" />
                  <path d="M4 2h3v3H4zM16 2h3v3h-3zM4 14h3v3H4z" fill={BLUE} />
                  <path d="M13 18l1-4 4-4 3 3-4 4z" fill="#f7b13c" />
                  <path d="M17 11l2-2c1.500 0 2.500 1 2.500 2.500L20 13.500z" fill="#e8404a" />
                </svg>
              </button>
              <button aria-label="Extrude1"><Extrude /></button>
              <button aria-label="Extrude2"><Extrude /></button>
            </FeatureRow>
            <svg width="72" height="7" fill="none" stroke="#c4c4c4" strokeWidth="2"><path d="M13 0v6h48V0M37 0v6" /></svg>
          </Features>
          <Marker>
            <svg width="12" height="34" viewBox="0 0 12 34">
              <path d="M0 2h12v4L7 11v23H5V11L0 6z" fill="#646464" />
            </svg>
          </Marker>
        </History>
        <button aria-label="Timeline settings"><Gear /></button>
      </Timeline>
    </App>
  );
}
